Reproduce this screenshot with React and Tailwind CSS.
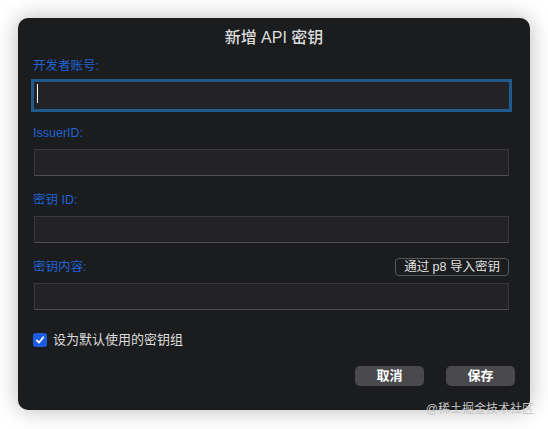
import React from "react";

const font = { fontFamily: '"Liberation Sans", "Noto Sans CJK SC", sans-serif' };

function Field({ label, focused, right }) {
  return (
    <div className="flex flex-col">
      <div className="flex h-4 items-center justify-between">
        <span className="text-[12.5px] leading-4 text-[#1f63d6]">{label}</span>
        {right}
      </div>
      <div
        className={
          "ml-px mt-2 h-[27px] w-[475px] bg-[#232325] " +
          (focused
            ? "relative ring-[3px] ring-[#1d5a8e]"
            : "border border-[#39393b] border-b-[#4e4e50]")
        }
      >
        {focused && <div className="absolute left-[3px] top-[2px] h-[19px] w-px bg-white" />}
      </div>
    </div>
  );
}

export default function App() {
  return (
    <div className="relative h-[429px] w-[548px] bg-white" style={font}>
      <div className="absolute left-[18px] top-[18px] flex h-[392px] w-[512px] flex-col rounded-[10px] bg-[#1b1c1e] px-[15px] pt-[10px] shadow-[0_0_22px_rgba(0,0,0,0.28)]">
        <div className="h-5 text-center text-[16px] font-medium leading-5 text-[#dcdcdc]">
          新增 API 密钥
        </div>
        <div className="mt-[10px] flex w-[476px] flex-col gap-4">
          <Field label="开发者账号:" focused />
          <Field label="IssuerID:" />
          <Field label="密钥 ID:" />
          <Field
            label="密钥内容:"
            right={
              <button className="h-[18px] rounded-[4px] border border-[#5a5a5c] px-[8px] text-[12.5px] leading-[16px] text-[#e0e0e0]">
                通过 p8 导入密钥
              </button>
            }
          />
        </div>
        <div className="mt-5 flex h-5 items-center gap-[6px]">
          <div className="flex h-[14px] w-[14px] items-center justify-center rounded-[3px] bg-[#1d5ce0]">
            <svg width="10" height="10" viewBox="0 0 10 10" fill="none">
              <path d="M1.8 5.3 L4 7.6 L8.3 2.2" stroke="white" strokeWidth="1.7" strokeLinecap="round" strokeLinejoin="round" />
            </svg>
          </div>
          <span className="text-[13px] leading-5 text-[#dddddd]">设为默认使用的密钥组</span>
        </div>
        <div className="mt-4 flex justify-end gap-[22px]">
          <button className="h-5 w-[69px] rounded-[5px] bg-[#4a4a4c] text-[13px] font-semibold leading-5 text-white">
            取消
          </button>
          <button className="h-5 w-[69px] rounded-[5px] bg-[#4a4a4c] text-[13px] font-semibold leading-5 text-white">
            保存
          </button>
        </div>
      </div>
      <div className="absolute bottom-[12px] right-[14px] text-[12px] leading-4 text-[#c4c4c4]">
        @稀土掘金技术社区
      </div>
    </div>
  );
}
